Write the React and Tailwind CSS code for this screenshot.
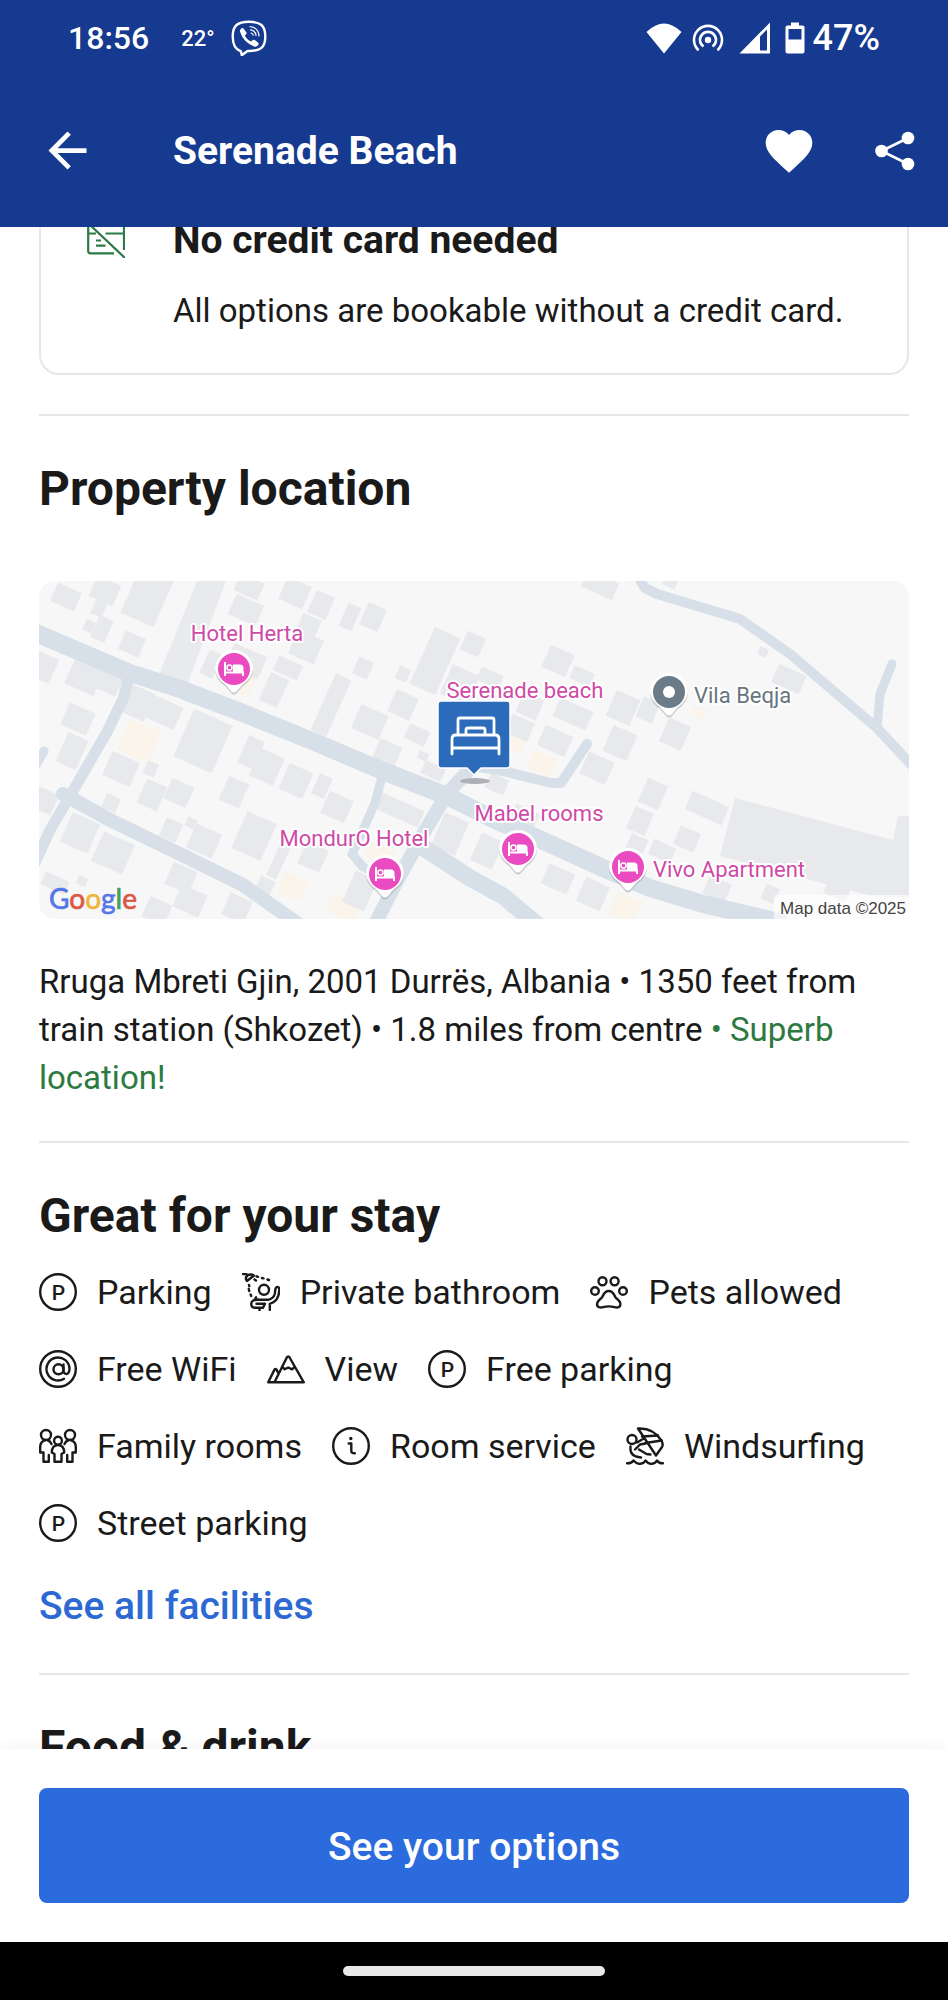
import React from "react";
import { MdArrowBack, MdFavorite } from "react-icons/md";

/* ---------- status bar icons ---------- */

function ViberIcon() {
  return (
    <svg viewBox="0 0 36 36" className="size-9" fill="none" stroke="currentColor" strokeLinejoin="round" strokeLinecap="round">
      <path strokeWidth="2.4" d="M10 31.5C4.500 29.500 1.700 25 1.700 16.500C1.700 5.500 6.500 1.800 18 1.800S34.300 5.500 34.300 16.500S29.500 31 18 31L16.500 31L10.800 35.300Z" />
      <path fill="currentColor" stroke="none" d="M12.300 8.200L15.300 12.200Q16 13.400 14.900 14.400L13.900 15.400Q15.500 19.600 20.200 21.400L21.500 20.200Q22.600 19.300 23.800 20.100L27.200 22.700Q28.200 23.700 27.200 25Q25.500 27.300 23.200 26.500Q12.500 22.300 9 11.700Q8.500 9.600 10.600 8.200Q11.500 7.600 12.300 8.200Z" />
      <path strokeWidth="1.200" d="M19 6.500Q27.500 7.500 28 16M19.500 9.800Q24.500 10.600 25 15.500M20 13Q22 13.400 22.200 15.200" />
    </svg>
  );
}

function WifiIcon() {
  return (
    <svg viewBox="0 0 36 31" className="h-[31px] w-9" fill="currentColor">
      <path d="M0.500 9Q18-8 35.500 9L18 30.500Z" />
    </svg>
  );
}

function HotspotIcon() {
  return (
    <svg viewBox="0 0 32 30" className="h-[30px] w-8" fill="none" stroke="currentColor" strokeWidth="2.600">
      <circle cx="16" cy="17" r="3.200" fill="currentColor" stroke="none" />
      <path d="M11.500 23.500A8 8 0 1 1 20.500 23.500M6.500 27.200A14 14 0 1 1 25.500 27.200" />
    </svg>
  );
}

function SignalIcon() {
  return (
    <svg viewBox="0 0 32 32" className="size-8" fill="currentColor">
      <path fillRule="evenodd" d="M0.500 31.500L31 0.500V31.500ZM21 14.500V28.500H28V7.500Z" />
    </svg>
  );
}

function BatteryIcon() {
  return (
    <svg viewBox="0 0 20 32" className="h-8 w-5" fill="currentColor">
      <path fillRule="evenodd" d="M6 0.500H14V3.500H17.500Q19.500 3.500 19.500 5.500V29.500Q19.500 31.500 17.500 31.500H2.500Q0.500 31.500 0.500 29.500V5.500Q0.500 3.500 2.500 3.500H6ZM3.500 7V17.500H16.500V7Z" />
    </svg>
  );
}

function ShareIcon() {
  return (
    <svg viewBox="0 0 40 40" className="size-10" fill="currentColor">
      <path d="M33 7L6.500 20L33 33" fill="none" stroke="currentColor" strokeWidth="2.600" />
      <circle cx="33" cy="7" r="6.300" />
      <circle cx="6.500" cy="20" r="6.300" />
      <circle cx="33" cy="33" r="6.300" />
    </svg>
  );
}

/* ---------- facility icons, all on a 38-unit grid ---------- */

function LineIcon({ children }) {
  return (
    <svg viewBox="0 0 38 38" className="size-[38px] shrink-0" fill="none" stroke="currentColor" strokeWidth="2.400" strokeLinecap="round" strokeLinejoin="round" aria-hidden="true">
      {children}
    </svg>
  );
}

function ParkingIcon() {
  return (
    <LineIcon>
      <circle cx="19" cy="19" r="17.800" />
      <text x="19.500" y="27" textAnchor="middle" fontSize="21" fontWeight="500" fill="currentColor" stroke="none">P</text>
    </LineIcon>
  );
}

function ShowerIcon() {
  return (
    <LineIcon>
      <path d="M1 1H3.500Q5 1 5.500 2.500M12 2.500L5 8Q2.500 5 5.500 2.500Q8.500 0.500 12 2.500Z" />
      <path d="M14.500 3.300L16 3.800M20 5L21.500 5.400M25.500 6.500L27 7M12.500 6.500L14 7.500M7 12L7.300 13.200M6.800 16L7.200 18M8.600 21.500L9.200 23" />
      <circle cx="22" cy="16.800" r="5" />
      <path d="M14 24.300Q12 26.800 16 26.800H26Q31.500 25.500 32.800 21L33.300 16.500Q33.800 13.500 36 14.200Q37.600 14.800 37.300 17.500Q37 23 34.500 26.500Q32 29.700 27.800 30.800V37" />
      <path d="M16 26.800Q9.200 26.500 9.200 31Q9.200 34.800 13.500 34.800H21M14.500 30.800H22.500M17.500 34.800V37.200M23 30.800L21 34.800" />
    </LineIcon>
  );
}

function PawIcon() {
  return (
    <LineIcon>
      <circle cx="12.500" cy="8.300" r="4" />
      <circle cx="24.600" cy="8.300" r="4" />
      <circle cx="5" cy="18" r="3.800" />
      <circle cx="33" cy="18" r="3.800" />
      <path d="M18.700 18C14.500 18 13.500 21.500 12.300 24C10.500 26.500 7 27.500 7 31C7 34.600 10.500 35 13 34.200C16.500 33.200 21 33.200 24.500 34.200C27.500 35 30.500 34.300 30.500 31C30.500 27.500 27 26.500 25.200 24C24 21.500 23 18 18.700 18Z" />
    </LineIcon>
  );
}

function AtIcon() {
  return (
    <LineIcon>
      <circle cx="19" cy="19" r="17.800" />
      <circle cx="19.500" cy="19.300" r="5" />
      <path d="M24.500 14.500V21Q24.800 24 27.500 24Q30.500 23.500 30.500 18.500A11.500 11.500 0 1 0 25 28.800" />
    </LineIcon>
  );
}

function MountainIcon() {
  return (
    <LineIcon>
      <path d="M7.500 32.300L19.800 7.500Q21.200 5.300 22.600 7.500L36.800 32.300H1.200L7.500 19.600Q8.500 18.300 9.500 19.600L11.500 23.500" />
      <path d="M15 17L17.800 19.300L21.200 17.500L25 19.300L27.800 17" />
    </LineIcon>
  );
}

function FamilyIcon() {
  return (
    <LineIcon>
      <circle cx="7" cy="8" r="5" />
      <circle cx="31" cy="8" r="5" />
      <circle cx="19" cy="13.700" r="3.900" />
      <path d="M6.500 13Q1.200 14.500 1.200 20V25.500H4.500V34.700H9.800V28M9 13.500Q11.500 14.200 12.500 17" />
      <path d="M31.500 13Q36.800 14.500 36.800 20V25.500H33.500V34.700H28.200V28M29 13.500Q26.500 14.200 25.500 17" />
      <path d="M19 18Q13 18 12.800 25.500L15.500 27V34.700H22.500V27L25.200 25.500Q25 18 19 18Z" />
    </LineIcon>
  );
}

function InfoIcon() {
  return (
    <LineIcon>
      <circle cx="19" cy="19" r="17.800" />
      <path d="M16.700 16.500H19.300V24Q19.300 26.500 22.800 26.300" />
      <circle cx="18.800" cy="11.500" r="1.700" fill="currentColor" stroke="none" />
    </LineIcon>
  );
}

function WindsurfIcon() {
  return (
    <LineIcon>
      <circle cx="6" cy="12.500" r="4.500" />
      <path d="M12 1.500Q27 0.500 35.500 13.500Q37.500 18 36 20L30 28.500Z" />
      <path d="M16 9.500L32 8.500M19.500 16L35.500 13.500" />
      <path d="M11 15.500L17 12M4.500 19.500V23Q5 27.500 10 29.500L15 30.500M9 22.500L14 17.500L19.500 16.500M13 22.500L20.500 27L24.500 27.500" />
      <path d="M1 36.300Q5.500 36.500 7.500 33.500Q11 37.300 14.500 36.800Q18 36.500 19.500 33.500Q22.500 37.300 26 36.800Q29.500 36.500 31 33.500Q33 36.500 37 36.300" />
    </LineIcon>
  );
}

function NoCardIcon() {
  return (
    <svg viewBox="0 0 38 38" className="mt-1 size-[38px] shrink-0 text-[#2c7a45]" fill="none" stroke="currentColor" strokeWidth="2.200" aria-hidden="true">
      <path d="M2.200 5Q1.200 5.500 1.200 7V31Q1.200 33.300 3.500 33.300H27M9 4.500H35Q37 4.500 37 7V30M1.500 13.500H9M18.500 13.500H37M9 20.500H14M9 25.700H18.500M1.500 3.500L38 38" />
    </svg>
  );
}

/* ---------- map ---------- */

const buildings = [
  [27, 16, 26, 20], [66, 10, 26, 22], [60, 27, 12, 16], [108, 16, 36, 50], [63, 48, 15, 24], [50, 45, 10, 12],
  [93, 63, 22, 20], [4, 86, 24, 26], [46, 95, 32, 30], [66, 99, 32, 22], [39, 138, 28, 24], [33, 170, 22, 32],
  [4, 219, 26, 22], [97, 121, 30, 30], [124, 131, 34, 24], [164, 160, 42, 52], [82, 188, 30, 26], [112, 188, 12, 14],
  [113, 214, 22, 26], [140, 212, 24, 22], [72, 222, 15, 15], [41, 252, 30, 32], [74, 272, 34, 32], [152, 242, 10, 10],
  [132, 249, 18, 20], [165, 260, 28, 26], [195, 211, 22, 26], [212, 171, 17, 30], [228, 186, 26, 30], [257, 200, 26, 28],
  [283, 205, 14, 22], [298, 226, 26, 24], [215, 255, 32, 40], [240, 279, 11, 38], [274, 276, 24, 24], [226, 305, 16, 16],
  [210, 6, 26, 18], [207, 29, 30, 22], [256, 12, 26, 24], [282, 24, 20, 24], [270, 44, 20, 18], [267, 66, 28, 26],
  [249, 87, 26, 16], [235, 109, 20, 30], [207, 80, 36, 24], [172, 83, 14, 26], [311, 36, 14, 25], [334, 36, 20, 24],
  [324, 87, 16, 18], [292, 124, 17, 62], [364, 93, 12, 14], [396, 80, 28, 62], [364, 124, 24, 24], [331, 141, 30, 26],
  [347, 175, 24, 28], [378, 154, 22, 16], [394, 190, 22, 14], [384, 175, 10, 8], [434, 63, 20, 20], [421, 104, 30, 32],
  [361, 229, 46, 18], [411, 253, 26, 36], [321, 310, 24, 34], [151, 320, 28, 24], [118, 330, 24, 22], [142, 297, 26, 24],
  [198, 327, 24, 24], [16, 302, 26, 14], [43, 300, 10, 9], [561, 4, 34, 18], [631, 1, 14, 10], [519, 80, 26, 24],
  [543, 95, 22, 14], [451, 97, 24, 14], [584, 127, 26, 28], [609, 129, 18, 22], [534, 133, 36, 20], [491, 125, 22, 22],
  [481, 147, 24, 20], [516, 160, 30, 22], [581, 162, 26, 28], [636, 153, 24, 26], [558, 187, 28, 24], [458, 203, 20, 16],
  [614, 213, 22, 26], [601, 240, 20, 24], [598, 263, 18, 16], [623, 270, 24, 16], [668, 227, 40, 20], [648, 258, 22, 20],
  [750, 98, 30, 20], [724, 71, 9, 9], [519, 298, 28, 22], [554, 313, 26, 26], [678, 308, 24, 20], [731, 313, 14, 16],
  [798, 310, 24, 14], [448, 270, 24, 30], [486, 235, 26, 16],
];

const gardens = [
  [100, 160, 34, 34], [254, 306, 26, 22], [304, 327, 30, 20], [341, 273, 28, 18], [503, 183, 26, 20],
  [478, 163, 16, 14], [659, 132, 12, 10], [586, 327, 26, 24], [205, 102, 18, 22],
];

const roads = [
  [18, "M-8 50L91 92L141 108L204 132L278 162L344 190L408 215L458 240L498 257L564 287L611 307L664 323L740 341"],
  [11, "M91 92L84 118L68 151L31 215L11 249L-4 282"],
  [14, "M24 213L71 239L141 273L204 304L262 345"],
  [9, "M344 192L336 222L324 249L313 273L324 286L340 294"],
  [14, "M440 178L408 213L384 253L358 300L335 345"],
  [17, "M374 260L431 297L464 315L500 345"],
  [10, "M440 186L464 190L512 202L522 202L548 163"],
  [10, "M598 -6L606 7L618 13L701 38L751 73L838 147L880 192"],
  [9, "M838 147L841 113L853 83"],
  [9, "M5 170L-3 184"],
];

function Blocks({ items, className }) {
  return (
    <g className={className}>
      {items.map(([x, y, w, h]) => (
        <rect key={`${x}-${y}`} x={x - w / 2} y={y - h / 2} width={w} height={h} transform={`rotate(24 ${x} ${y})`} />
      ))}
    </g>
  );
}

function PinShape({ x, y, fill, children }) {
  return (
    <g transform={`translate(${x} ${y})`}>
      <path d="M-19 2A19 19 0 1 1 19 2Q18 11 9 17L3 24Q0 27 -3 24L-9 17Q-18 11 -19 2Z" fill="#9aa0a6" opacity="0.500" />
      <path d="M-19 0A19 19 0 1 1 19 0Q18 9 9 15L3 22Q0 25 -3 22L-9 15Q-18 9 -19 0Z" fill="#fff" />
      <circle r="16" fill={fill} />
      {children}
    </g>
  );
}

function HotelPin({ x, y }) {
  return (
    <PinShape x={x} y={y} fill="#ea4bc0">
      <path d="M-9 -7V7M-9 3.500H9V7" fill="none" stroke="#fff" strokeWidth="2" />
      <path d="M-1 -4.500H6Q9.500 -4.500 9.500 -1V4H-1Z" fill="#fff" />
      <circle cx="-4.500" cy="-1.500" r="2.600" fill="none" stroke="#fff" strokeWidth="1.500" />
    </PinShape>
  );
}

function MapLabel({ x, y, anchor = "middle", fill = "#cf4aa6", children }) {
  return (
    <text x={x} y={y} textAnchor={anchor} fontSize="22" fill={fill} stroke="#fff" strokeWidth="4" strokeLinejoin="round" paintOrder="stroke">
      {children}
    </text>
  );
}

function LocationMap() {
  return (
    <a href="#map" aria-label="Open map" className="mt-[60px] block overflow-hidden rounded-2xl">
      <svg viewBox="0 0 870 338" preserveAspectRatio="xMidYMid slice" className="block h-[338px] w-full">
        <rect width="870" height="338" fill="#f7f7f8" />
        <path d="M158 0H187L147 107L119 96Z" fill="#e8eaed" />
        <Blocks items={gardens} className="fill-[#faf4ea]" />
        <Blocks items={buildings} className="fill-[#e8e9ec]" />
        <path d="M696 217L854 259L859 235H872V316H836L681 275Z" fill="#e8e9ec" />
        <g fill="none" stroke="#d7dfe8" strokeLinecap="round" strokeLinejoin="round">
          {roads.map(([width, d]) => (
            <path key={d} d={d} strokeWidth={width} />
          ))}
        </g>

        <MapLabel x={208} y={60}>Hotel Herta</MapLabel>
        <HotelPin x={195} y={88} />
        <MapLabel x={315} y={265}>MondurO Hotel</MapLabel>
        <HotelPin x={346} y={293} />
        <MapLabel x={500} y={240}>Mabel rooms</MapLabel>
        <HotelPin x={479} y={268} />
        <MapLabel x={614} y={296} anchor="start">Vivo Apartment</MapLabel>
        <HotelPin x={589} y={286} />
        <MapLabel x={655} y={122} anchor="start" fill="#66757f">Vila Beqja</MapLabel>
        <PinShape x={630} y={111} fill="#6b7b88">
          <circle r="6" fill="#fff" />
        </PinShape>
        <MapLabel x={486} y={117}>Serenade beach</MapLabel>

        <ellipse cx="436" cy="200" rx="15" ry="3" fill="#aeb0b6" />
        <path d="M402 120H468Q471 120 471 123V184Q471 187 468 187H442L435 194L428 187H402Q399 187 399 184V123Q399 120 402 120Z" fill="#2b6bb9" stroke="#fff" strokeWidth="1.500" />
        <g fill="none" stroke="#fff" strokeWidth="2.800" strokeLinejoin="round" strokeLinecap="round">
          <path d="M419 153V139Q419 137 421 137H453Q455 137 455 139V153" />
          <path d="M427 153V149Q427 147 429 147H444Q446 147 446 149V153" />
          <path d="M413 173V158Q413 154 417 154H456Q460 154 460 158V173M413 167H460" />
        </g>

        <text x="10" y="328" fontSize="28" fontFamily="Lato, sans-serif" strokeWidth="0.700">
          <tspan fill="#5577e8" stroke="#5577e8">G</tspan>
          <tspan fill="#dc5745" stroke="#dc5745">o</tspan>
          <tspan fill="#edb63c" stroke="#edb63c">o</tspan>
          <tspan fill="#5577e8" stroke="#5577e8">g</tspan>
          <tspan fill="#4a9c5b" stroke="#4a9c5b">l</tspan>
          <tspan fill="#dc5745" stroke="#dc5745">e</tspan>
        </text>
        <rect x="735" y="314" width="135" height="24" fill="#fff" opacity="0.600" />
        <text x="867" y="333" textAnchor="end" fontSize="17" fontFamily="'Liberation Sans', Arial, sans-serif" fill="#444">Map data ©2025</text>
      </svg>
    </a>
  );
}

/* ---------- page ---------- */

const facilities = [
  ["Parking", ParkingIcon],
  ["Private bathroom", ShowerIcon],
  ["Pets allowed", PawIcon],
  ["Free WiFi", AtIcon],
  ["View", MountainIcon],
  ["Free parking", ParkingIcon],
  ["Family rooms", FamilyIcon],
  ["Room service", InfoIcon],
  ["Windsurfing", WindsurfIcon],
  ["Street parking", ParkingIcon],
];

function Divider() {
  return <hr className="mt-[39px] border-t-2 border-[#e7e7e7]" />;
}

function SectionTitle({ children }) {
  return <h2 className="mt-[41px] text-[48px] leading-[64px] font-bold">{children}</h2>;
}

export default function App() {
  return (
    <div className="flex h-screen flex-col bg-white font-[Roboto,sans-serif] text-[#1a1a1a]">
      <header className="shrink-0 bg-[#163a90] text-white">
        <div className="flex h-[76px] items-center justify-between pr-[68px] pl-[68px]">
          <div className="flex items-center">
            <span className="text-[32px] font-medium">18:56</span>
            <span className="ml-[32px] text-[22px] font-medium">22°</span>
            <span className="ml-[16px]"><ViberIcon /></span>
          </div>
          <div className="flex items-center">
            <WifiIcon />
            <span className="ml-[10px]"><HotspotIcon /></span>
            <span className="ml-[15px]"><SignalIcon /></span>
            <span className="ml-[14px]"><BatteryIcon /></span>
            <span className="ml-[8px] text-[36px] font-medium">47%</span>
          </div>
        </div>
        <div className="flex h-[151px] items-center pr-[33px] pb-[2px] pl-[39px]">
          <button type="button" aria-label="Back"><MdArrowBack className="size-[57px]" /></button>
          <h1 className="ml-[77px] flex-1 text-[39px] leading-[48px] font-bold">Serenade Beach</h1>
          <button type="button" aria-label="Save"><MdFavorite className="size-14" /></button>
          <button type="button" aria-label="Share" className="ml-[58px]"><ShareIcon /></button>
        </div>
      </header>

      <main className="min-h-0 flex-1 overflow-hidden px-[39px]">
        <section className="-mt-[51px] flex gap-[48px] rounded-[20px] border-2 border-[#e7e7e7] px-[46px] py-[38px]">
          <NoCardIcon />
          <div>
            <h2 className="text-[39px] leading-[48px] font-bold">No credit card needed</h2>
            <p className="mt-[23px] text-[33px] leading-[48px]">All options are bookable without a credit card.</p>
          </div>
        </section>

        <Divider />
        <section>
          <SectionTitle>Property location</SectionTitle>
          <LocationMap />
          <p className="mt-[39px] text-[33px] leading-[48px]">
            Rruga Mbreti Gjin, 2001 Durrës, Albania • 1350 feet from train station (Shkozet) • 1.8 miles from centre{" "}
            <span className="text-[#2c7a3f]">• Superb location!</span>
          </p>
        </section>

        <Divider />
        <section>
          <SectionTitle>Great for your stay</SectionTitle>
          <ul className="mt-[20px] flex flex-wrap gap-x-[30px] gap-y-[29px]">
            {facilities.map(([name, Icon]) => (
              <li key={name} className="flex items-center gap-[20px] text-[34px] leading-[48px]">
                <Icon />
                {name}
              </li>
            ))}
          </ul>
          <a href="#facilities" className="mt-[35px] mb-1 inline-block text-[39px] leading-[48px] font-medium text-[#2d69d3]">See all facilities</a>
        </section>

        <Divider />
        <SectionTitle>Food &amp; drink</SectionTitle>
      </main>

      <footer className="relative z-10 shrink-0 bg-white px-[39px] py-[39px] shadow-[0_0_16px_rgba(0,0,0,0.06)]">
        <button type="button" className="h-[115px] w-full rounded-lg bg-[#2c6bdd] pt-1 text-[39px] font-medium text-white">See your options</button>
      </footer>
      <div className="flex h-[58px] shrink-0 items-center justify-center bg-black">
        <div className="h-[10px] w-[262px] rounded-full bg-[#e8e8e8]" />
      </div>
    </div>
  );
}
